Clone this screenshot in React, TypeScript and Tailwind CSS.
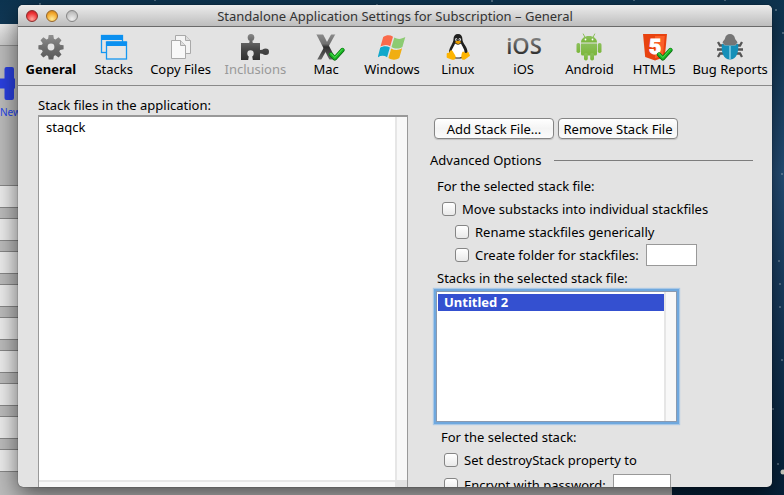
import { useState } from "react";
import type { ReactNode } from "react";

function GearIcon() {
  return (
    <svg width="26" height="26" viewBox="0 0 26 26">
      <defs>
        <linearGradient id="gear" x1="0" y1="0" x2="0" y2="1">
          <stop offset="0" stopColor="#909090" />
          <stop offset="0.5" stopColor="#6e6e6e" />
          <stop offset="1" stopColor="#5a5a5a" />
        </linearGradient>
        <mask id="gearHole">
          <rect width="26" height="26" fill="#fff" />
          <circle cx="13" cy="13" r="3.4" fill="#000" />
        </mask>
      </defs>
      <g mask="url(#gearHole)" fill="url(#gear)">
        <path d="M10.7 1h4.6l.6 3.7 1.6.7 3.1-2.2 2.9 3-2.2 3 .7 1.6 3.6.5v4l-3.6.6-.7 1.6 2.2 3-2.9 3-3.1-2.2-1.6.7-.6 3.4h-4.6l-.6-3.4-1.6-.7-3.1 2.2-2.9-3 2.2-3-.7-1.6L.4 15.300v-4l3.600-.5.7-1.600-2.200-3 2.900-3 3.100 2.200 1.600-.7z" />
      </g>
    </svg>
  );
}

function StacksIcon() {
  return (
    <svg width="28" height="26" viewBox="0 0 28 26">
      <rect x="1.500" y="1.500" width="21" height="17" fill="#e4e4e4" stroke="#1497f2" strokeWidth="1.300" />
      <rect x="1" y="1" width="22" height="5" rx="1" fill="#0b90f0" />
      <rect x="6.500" y="8" width="20" height="17" fill="#e6e6e6" stroke="#1497f2" strokeWidth="1.300" />
      <rect x="6" y="7.500" width="21" height="4.500" rx="1" fill="#0b90f0" />
    </svg>
  );
}

function CopyIcon() {
  return (
    <svg width="22" height="26" viewBox="0 0 22 26">
      <g stroke="#a9a9a9" strokeWidth="1" strokeLinejoin="round">
        <path d="M5.500 1.500h10l5 5v13h-15z" fill="#f4f4f4" />
        <path d="M15.500 1.500v5h5" fill="#dcdcdc" />
        <path d="M1.500 6.500h9l5 5v13h-14z" fill="#f8f8f8" />
        <path d="M10.500 6.500v5h5" fill="#dedede" />
      </g>
    </svg>
  );
}

function PuzzleIcon() {
  return (
    <svg width="28" height="28" viewBox="0 0 28 28">
      <defs>
        <linearGradient id="puzzle" gradientUnits="userSpaceOnUse" x1="0" y1="0" x2="0" y2="27">
          <stop offset="0" stopColor="#8a8a8a" />
          <stop offset="0.6" stopColor="#484848" />
          <stop offset="1" stopColor="#303030" />
        </linearGradient>
        <mask id="puzzleNotch">
          <rect width="28" height="28" fill="#fff" />
          <circle cx="9.500" cy="20.500" r="3.200" fill="#000" />
          <path d="M8 22h3l1 6H7z" fill="#000" />
        </mask>
      </defs>
      <g fill="url(#puzzle)" mask="url(#puzzleNotch)">
        <path d="M0 10h8.200l.6-3h2.400l.6 3H19v7l4-.5v4.500l-4-.5V27H0z" />
        <ellipse cx="10" cy="4.500" rx="3.300" ry="3.500" />
        <ellipse cx="24.600" cy="18.700" rx="3.400" ry="3.300" />
      </g>
    </svg>
  );
}

function Tick() {
  return (
    <g fill="none" strokeLinecap="round" strokeLinejoin="round">
      <path d="M17 21.500l3.800 4 7.700-8.500" stroke="#0b6b12" strokeWidth="4.200" />
      <path d="M17 21.200l3.800 4 7.700-8.500" stroke="#19b524" strokeWidth="3" />
      <path d="M17 20.500l3.800 4 7.200-8" stroke="#55dd55" strokeWidth="1" />
    </g>
  );
}

function MacIcon() {
  return (
    <svg width="32" height="28" viewBox="0 0 32 28" className="translate-x-1">
      <defs>
        <linearGradient id="mac" gradientUnits="userSpaceOnUse" x1="0" y1="1" x2="0" y2="27">
          <stop offset="0" stopColor="#8c8c8c" />
          <stop offset="0.38" stopColor="#707070" />
          <stop offset="0.5" stopColor="#2e2e2e" />
          <stop offset="1" stopColor="#6a6a6a" />
        </linearGradient>
        <clipPath id="macClip">
          <rect x="1" y="1.500" width="24" height="25" />
        </clipPath>
      </defs>
      <g stroke="url(#mac)" clipPath="url(#macClip)">
        <line x1="20.500" y1="-1" x2="4" y2="29" strokeWidth="3.600" />
        <line x1="4.500" y1="-1" x2="20" y2="29" strokeWidth="6" />
      </g>
      <Tick />
    </svg>
  );
}

function WindowsIcon() {
  return (
    <svg width="28" height="26" viewBox="0 0 28 26">
      <path d="M5.200 3C8.500.8 12 .8 15 2.700l-2.800 9.600C9 10.500 5.700 10.700 2.500 12.600z" fill="#fa6a4a" />
      <path d="M16.300 3.500c3.300 2 7 1.800 11-.4l-2.900 9.800c-3.700 2.200-7.200 2.100-10.900 0z" fill="#8ccb72" />
      <path d="M2.200 13.800c3.300-2.100 6.500-2 9.700-.2L9.100 23.200C6 21.300 2.800 21.500-.3 23.400z" fill="#11a8cb" />
      <path d="M13.200 14.400c3.500 2 7 2.100 10.900-.1l-2.800 9.700c-3.600 2.300-7.200 2.200-10.900 0z" fill="#f0ae13" />
    </svg>
  );
}

function LinuxIcon() {
  return (
    <svg width="24" height="28" viewBox="0 0 24 28">
      <path d="M12 1c3 0 4.400 2 4.400 5 0 4.500 5.200 7.500 5.200 13.500 0 4-4 6-9.600 6s-9-2-9-6C3 14 7.500 10.500 7.500 6c0-3 1.500-5 4.500-5z" fill="#20201f" />
      <path d="M9 10.500c1.500 1.500 4.500 1.500 6 0 1 3 3.500 5 3.500 9 0 3.500-3 5-6.500 5s-6.500-1.500-6.500-5C5.500 15.500 8.300 13.500 9 10.500z" fill="#fff" />
      <ellipse cx="10.200" cy="6.500" rx="1.100" ry="1.500" fill="#ddd" />
      <ellipse cx="13.800" cy="6.500" rx="1.200" ry="1.500" fill="#ddd" />
      <circle cx="10.500" cy="6.800" r=".6" fill="#111" />
      <circle cx="13.500" cy="6.800" r=".6" fill="#111" />
      <path d="M8.900 8.900c1.800-1.500 4.500-1.500 6.200 0-1 1.400-2.100 2-3.100 2s-2.100-.7-3.100-2z" fill="#e89c00" />
      <path d="M4.500 17.500c1.500-.6 2.300.8 3.200 2.400.8 1.500 2.300 2.700 2 4.500-.3 2.200-2.200 2.700-4.200 2L1.400 25c-1.300-.5-.5-1.800-.7-3.200-.2-1.500.3-1.700 1.500-1.800 1.300-.1 1.300-2 2.300-2.500z" fill="#fdb400" />
      <path d="M16.300 19.200c.6-1 1.200-.6 2 .1 1.200 1 2.400.8 3.200-.3.700-.9 1.300.5 1.500 1.500.3 1.200 1.800 1.700.3 2.800l-4 2.900c-1.800 1.200-3.800.6-3.900-1.700-.1-1.800.1-3.900.9-5.300z" fill="#fdb400" />
    </svg>
  );
}

function AndroidIcon() {
  return (
    <svg width="26" height="28" viewBox="0 0 26 28">
      <defs>
        <linearGradient id="droid" x1="0" y1="0" x2="0" y2="1">
          <stop offset="0" stopColor="#8cc05c" />
          <stop offset="1" stopColor="#7ab63a" />
        </linearGradient>
      </defs>
      <g fill="url(#droid)">
        <path d="M5 9.500C5 5.500 8.500 3 13 3s8 2.500 8 6.500z" />
        <path d="M5 10.500h16V21a1.500 1.500 0 0 1-1.500 1.500h-13A1.500 1.500 0 0 1 5 21z" />
        <rect x="0.500" y="10" width="3.700" height="10" rx="1.800" />
        <rect x="21.800" y="10" width="3.700" height="10" rx="1.800" />
        <rect x="8" y="20" width="3.800" height="7.500" rx="1.800" />
        <rect x="14.200" y="20" width="3.800" height="7.500" rx="1.800" />
      </g>
      <path d="M8.800 4L7.300 1M17.200 4l1.500-3" stroke="#8cc05c" strokeWidth="1" strokeLinecap="round" />
      <circle cx="9.500" cy="6.500" r=".9" fill="#fff" />
      <circle cx="16.500" cy="6.500" r=".9" fill="#fff" />
    </svg>
  );
}

function Html5Icon() {
  return (
    <svg width="32" height="28" viewBox="0 0 32 28" className="translate-x-1">
      <path d="M1 1h24l-2.200 23L13 27.500 3.200 24z" fill="#e8420f" />
      <path d="M13 3h9.800l-1.900 19.500L13 25.200z" fill="#fb6028" />
      <text x="13" y="21" textAnchor="middle" fontFamily="Roboto" fontWeight="900" fontSize="21" fill="#fff" stroke="#fff" strokeWidth="1">5</text>
      <Tick />
    </svg>
  );
}

function BugIcon() {
  return (
    <svg width="28" height="28" viewBox="0 0 28 28">
      <g fill="none" stroke="#555" strokeWidth="2.300">
        <path d="M8 12.500H4L2 9M20 12.500h4L26 9M7 16.500H1M21 16.500h6M8 20.500H4L2 24M20 20.500h4l2 3.500" />
      </g>
      <path d="M6.500 9.500C7 7.500 9 6.500 9 5.500 9.500 2.500 11.300 1 14 1s4.500 1.500 5 4.500c0 1 2 2 2.500 4l-2.500 3h-10z" fill="#757575" />
      <path d="M6 10.500l3 2h10l3-2c1.300 8.500-1.500 16-8 16S4.700 19 6 10.500z" fill="#158fb8" />
      <path d="M14 13v13" stroke="#a5dff2" strokeWidth="1.200" />
    </svg>
  );
}

const tools: { name: string; icon: ReactNode }[] = [
  { name: "General", icon: <GearIcon /> },
  { name: "Stacks", icon: <StacksIcon /> },
  { name: "Copy Files", icon: <CopyIcon /> },
  { name: "Inclusions", icon: <PuzzleIcon /> },
  { name: "Mac", icon: <MacIcon /> },
  { name: "Windows", icon: <WindowsIcon /> },
  { name: "Linux", icon: <LinuxIcon /> },
  {
    name: "iOS",
    icon: (
      <svg width="36" height="26" viewBox="0 0 36 26">
        <defs>
          <linearGradient id="ios" x1="0" y1="0" x2="0" y2="1">
            <stop offset="0.2" stopColor="#8a8a8a" />
            <stop offset="0.8" stopColor="#303030" />
          </linearGradient>
        </defs>
        <text x="18" y="20" textAnchor="middle" fontFamily="Open Sans" fontWeight="600" fontSize="22" fill="url(#ios)">iOS</text>
      </svg>
    ),
  },
  { name: "Android", icon: <AndroidIcon /> },
  { name: "HTML5", icon: <Html5Icon /> },
  { name: "Bug Reports", icon: <BugIcon /> },
];

const stars = [
  [40, 4], [94, 11], [155, 0], [230, 9], [377, 5], [492, 1], [634, 0], [725, 0], [776, 10],
  [783, 33], [782, 174], [779, 261], [780, 284], [780, 307], [782, 360], [773, 409], [778, 464],
];

function Check({ label, className = "" }: { label: string; className?: string }) {
  return (
    <label className={`flex items-center gap-1.5 ${className}`}>
      <input
        type="checkbox"
        className="size-3.5 shrink-0 appearance-none rounded-[3px] border border-[#858585] bg-gradient-to-b from-white to-[#e9e9e9] checked:bg-[#3450d0]"
      />
      {label}
    </label>
  );
}

interface ListBoxProps {
  label: string;
  items: string[];
  initial?: string;
  className?: string;
}

function ListBox({ label, items, initial = "", className = "" }: ListBoxProps) {
  const [selected, setSelected] = useState(initial);
  return (
    <div className={`flex bg-white pl-px ${className}`}>
      <ul role="listbox" aria-label={label} className="flex-1 py-0.5">
        {items.map((item) => (
          <li
            key={item}
            role="option"
            aria-selected={item === selected}
            onClick={() => setSelected(item)}
            className={`px-1.5 leading-[17px] ${item === selected ? "bg-[#3450d0] font-bold text-white" : ""}`}
          >
            {item}
          </li>
        ))}
      </ul>
      <div className="w-3 border-l-2 border-[#e6e6e6] bg-[#f8f8f8]" />
    </div>
  );
}

function BackWindow() {
  return (
    <div className="absolute bottom-0 left-0 right-28 top-6 bg-[#bcbcbc]">
      <div className="h-[22px] border-b border-[#909090] bg-gradient-to-b from-[#ececec] to-[#cacaca]" />
      <svg width="15" height="33" viewBox="0 0 15 33" className="mt-[21px]">
        <rect x="4.500" width="9.500" height="33" rx="2" fill="#2a40e0" />
        <rect y="11.500" width="20" height="10" fill="#2a40e0" />
      </svg>
      <div className="mt-1.5 text-[10px] leading-3 text-[#2244ee]">New</div>
      <div className="mt-[67px] flex flex-col gap-2.5">
        {[1, 2, 3, 4, 5, 6, 7, 8, 9].map((n) => (
          <div key={n} className="h-[23px] border-y border-[#888] bg-[#ececec]" />
        ))}
      </div>
    </div>
  );
}

export default function App() {
  const [active, setActive] = useState("General");

  return (
    <div className="relative flex h-screen overflow-hidden bg-gradient-to-b from-[#0d3450] via-[#26507a] via-35% to-[#06213a] text-[13px] leading-4 text-black font-['Noto_Sans',sans-serif]">
      <svg className="absolute inset-0 size-full">
        {stars.map(([x, y]) => (
          <circle key={`${x}-${y}`} cx={x} cy={y} r="1" fill="#b8c8d4" opacity=".5" />
        ))}
        <circle cx="783" cy="472" r="2.500" fill="#d8d8cc" />
      </svg>
      <BackWindow />

      <main className="relative mb-2 ml-[18px] mr-3 mt-[5px] flex min-w-0 flex-1 flex-col overflow-hidden rounded-[5px] bg-[#e3e3e3] shadow-[0_8px_24px_rgba(0,0,0,0.6),0_0_1px_#000]">
        <header className="relative flex h-[22px] shrink-0 items-center border-b border-[#6a6a6a] bg-gradient-to-b from-[#ececec] to-[#bdbdbd] px-2">
          <div className="flex gap-2">
            <button aria-label="Close" className="size-3 rounded-full border border-[#8d2a2a] bg-[radial-gradient(circle_at_50%_80%,#ffa8a0,#ee3438_60%,#b81820)]" />
            <button aria-label="Minimize" className="size-3 rounded-full border border-[#95662a] bg-[radial-gradient(circle_at_50%_80%,#ffec98,#f3a92e_60%,#c87818)]" />
            <button aria-label="Zoom" className="size-3 rounded-full border border-[#858585] bg-[radial-gradient(circle_at_50%_80%,#eee,#c6c6c6_60%,#a8a8a8)]" />
          </div>
          <h1 className="flex-1 pr-[52px] text-center text-[#333]">
            Standalone Application Settings for Subscription – General
          </h1>
        </header>

        <nav className="grid h-[59px] shrink-0 grid-cols-[62fr_64fr_70fr_80fr_62fr_70fr_62fr_70fr_62fr_68fr_84fr] border-b border-[#8a8a8a] pl-0.5 pt-[5px]">
          {tools.map((tool) => (
            <button
              key={tool.name}
              disabled={tool.name === "Inclusions"}
              onClick={() => setActive(tool.name)}
              className={`flex min-w-0 flex-col items-center whitespace-nowrap disabled:text-[#999] ${tool.name === active ? "font-bold" : ""}`}
            >
              <span className="flex h-[29px] items-center">{tool.icon}</span>
              {tool.name}
            </button>
          ))}
        </nav>

        <div className="flex min-h-0 flex-1 gap-[22px] overflow-hidden pl-5 pr-[19px]">
          <section className="flex min-w-0 flex-[370] flex-col pt-[11px]">
            <h2 className="mb-0.5">Stack files in the application:</h2>
            <ListBox label="Stack files in the application" items={["staqck"]} className="flex-1 border-x border-t-2 border-[#999]" />
            <div className="flex h-[7px] border-x border-[#999] bg-[#f8f8f8]">
              <div className="flex-1 border-t-2 border-[#e6e6e6]" />
              <div className="w-3 bg-[#e3e3e3]" />
            </div>
          </section>

          <section className="min-w-0 flex-[323] whitespace-nowrap pt-8">
            <div className="flex gap-1 pl-1">
              {["Add Stack File...", "Remove Stack File"].map((name) => (
                <button key={name} className="h-[21px] w-[120px] rounded border border-[#858585] bg-gradient-to-b from-white via-[#f4f4f4] to-[#fbfbfb] shadow-[0_1px_1px_rgba(0,0,0,0.15)]">
                  {name}
                </button>
              ))}
            </div>

            <h2 className="mt-[13px] flex items-center gap-3">
              Advanced Options
              <span className="h-px flex-1 bg-[#7d7d7d]" />
            </h2>

            <div className="mt-2.5 flex flex-col gap-[7px] pl-[7px]">
              <h3>For the selected stack file:</h3>
              <Check label="Move substacks into individual stackfiles" className="pl-[5px]" />
              <Check label="Rename stackfiles generically" className="pl-[18px]" />
              <div className="flex h-4 items-center gap-[7px] pl-[18px]">
                <Check label="Create folder for stackfiles:" />
                <input aria-label="Folder name" className="h-[22px] w-[51px] border border-[#999] bg-white px-1" />
              </div>
              <h3>Stacks in the selected stack file:</h3>
            </div>

            <div className="mt-[5px] pl-1.5">
              <ListBox
                label="Stacks in the selected stack file"
                items={["Untitled 2"]}
                initial="Untitled 2"
                className="h-[131px] w-[241px] border border-[#8a9ab0] shadow-[0_0_0_2px_#6fa8de,0_0_1px_3px_#a9c8e6]"
              />
            </div>

            <div className="mt-[7px] flex flex-col gap-[7px] pl-[11px]">
              <h3>For the selected stack:</h3>
              <Check label="Set destroyStack property to" className="pl-[3px]" />
              <div className="mt-0.5 flex h-4 items-center gap-[7px] pl-[3px]">
                <Check label="Encrypt with password:" />
                <input type="password" aria-label="Password" className="h-[22px] w-[58px] border border-[#999] bg-white px-1" />
              </div>
            </div>
          </section>
        </div>
      </main>
    </div>
  );
}
